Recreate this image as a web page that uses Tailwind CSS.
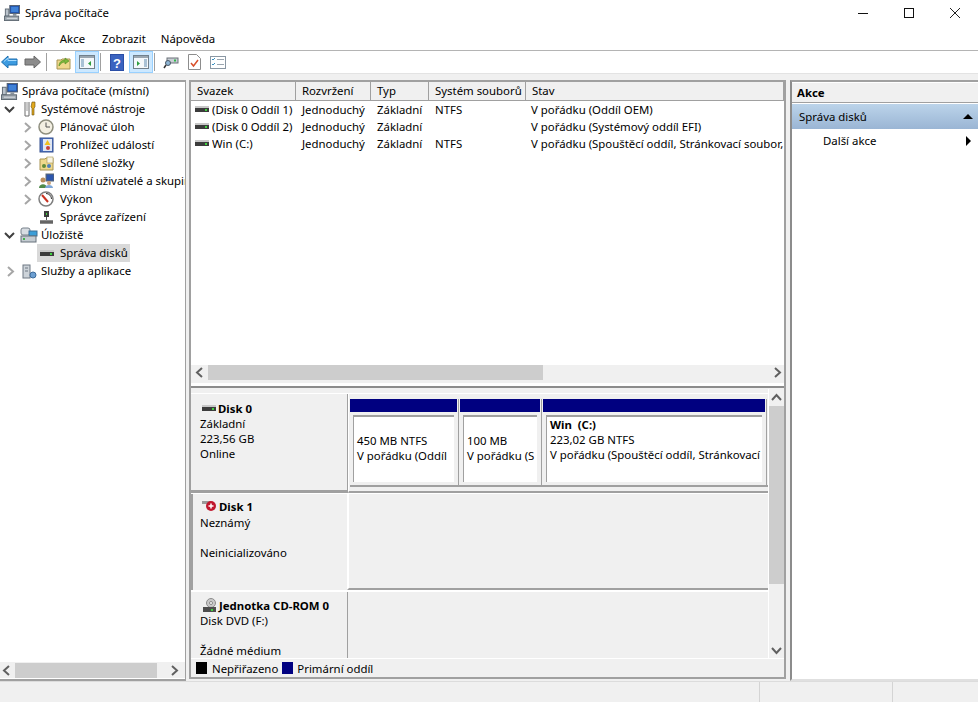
<!DOCTYPE html>
<html lang="cs">
<head>
<meta charset="UTF-8">
<title>Správa počítače</title>
<script src="https://cdn.jsdelivr.net/npm/@tailwindcss/browser@4"></script>
</head>
<body class="w-[978px] h-[702px] overflow-hidden bg-[#f0f0f0] text-[11.4px] leading-[16px] text-black font-['Noto_Sans','Liberation_Sans',sans-serif]">
<svg width="0" height="0" class="block h-0">
  <defs>
    <symbol id="chev-r" viewBox="0 0 9 11"><path d="M2 1l5 4.500-5 4.500" fill="none" stroke="#a6a6a6" stroke-width="2"/></symbol>
    <symbol id="chev-d" viewBox="0 0 11 9"><path d="M1 2l4.500 4.500L10 2" fill="none" stroke="#404040" stroke-width="2"/></symbol>
    <symbol id="sb-l" viewBox="0 0 9 11"><path d="M7 1L2 5.500 7 10" fill="none" stroke="#606060" stroke-width="2"/></symbol>
    <symbol id="sb-r" viewBox="0 0 9 11"><path d="M2 1l5 4.500L2 10" fill="none" stroke="#606060" stroke-width="2"/></symbol>
    <symbol id="sb-u" viewBox="0 0 11 9"><path d="M1 7l4.500-5L10 7" fill="none" stroke="#606060" stroke-width="2"/></symbol>
    <symbol id="sb-d" viewBox="0 0 11 9"><path d="M1 2l4.500 5L10 2" fill="none" stroke="#606060" stroke-width="2"/></symbol>
    <symbol id="hdd" viewBox="0 0 14 7"><rect width="14" height="2" fill="#c8c8c8"/><rect y="2" width="14" height="4" fill="#3c3c3c"/><rect x="10" y="3" width="2" height="2" fill="#3fd33f"/></symbol>
    <symbol id="computer" viewBox="0 0 18 18"><rect x="6.500" y=".5" width="11" height="9" fill="#1f4fa8" stroke="#55606e"/><rect x="8" y="2" width="8" height="6" fill="#3f82d8"/><rect x="10" y="10" width="4" height="2" fill="#8a949e"/><rect x="1.500" y="4.500" width="4" height="8" fill="#b9c2cb" stroke="#5b6670"/><rect x=".5" y="12.500" width="16" height="5" fill="#9aa3ab" stroke="#5b6670"/><path d="M3 15h12" stroke="#e2e6ea"/></symbol>
  </defs>
</svg>

<!-- title bar -->
<div class="h-[28px] bg-white flex items-center pb-[2px]">
  <svg class="ml-[4px] mr-[5px] w-[16px] h-[16px] shrink-0"><use href="#computer"/></svg>
  <span>Správa počítače</span>
  <div class="ml-auto flex items-center">
    <svg class="w-[46px] h-[14px]" viewBox="0 0 46 14"><path d="M18 7.500h10" stroke="#111"/></svg>
    <svg class="w-[46px] h-[14px]" viewBox="0 0 46 14"><rect x="18.500" y="2.500" width="9" height="9" fill="none" stroke="#111"/></svg>
    <svg class="w-[46px] h-[14px]" viewBox="0 0 46 14"><path d="M18 2l10 10M28 2L18 12" stroke="#222"/></svg>
  </div>
</div>

<!-- menu -->
<div class="h-[23px] bg-white border-b border-[#b4b4b4] flex items-center pl-[6px]">
  <span>Soubor</span><span class="ml-[15px]">Akce</span><span class="ml-[17px]">Zobrazit</span><span class="ml-[15px]">Nápověda</span>
</div>

<!-- toolbar -->
<div class="h-[23px] bg-white border-b border-[#e3e3e3] flex items-center">
  <svg class="ml-[1px] w-[17px] h-[14px] shrink-0" viewBox="0 0 17 14"><path d="M0.500 7L7 1v3h9v6H7v3z" fill="#3d9be0" stroke="#1d6fb0"/><path d="M3 6.500L7 3v2.500h8.500" fill="none" stroke="#a8dcff"/></svg>
  <svg class="ml-[6px] w-[17px] h-[14px] shrink-0" viewBox="0 0 17 14"><path d="M16.500 7L10 1v3H1v6h9v3z" fill="#8c8c8c" stroke="#666"/></svg>
  <div class="ml-[5px] w-px h-[18px] bg-[#a0a0a0]"></div>
  <svg class="ml-[9px] w-[15px] h-[15px] shrink-0" viewBox="0 0 15 15"><path d="M1 5h4l1-1h8v10H1z" fill="#efd98c" stroke="#a89452"/><path d="M3 11c0-4 3-6 6-6V3l4 3-4 3V7C6 7 4.500 9 3 11z" fill="#7cb83c" stroke="#4f8a1f" stroke-width=".6"/></svg>
  <div class="ml-[4px] w-[24px] h-[22px] bg-[#cce8ff] border border-[#99d1ff] flex items-center justify-center">
    <svg class="w-[16px] h-[14px]" viewBox="0 0 16 14"><rect x=".5" y=".5" width="15" height="13" fill="#f4f8fb" stroke="#71808c"/><rect x="1" y="1" width="14" height="2" fill="#9aa6b0"/><path d="M2 5h3M2 7h3M2 9h3M2 11h3" stroke="#5f8bb0"/><path d="M12 6v5L9 8.500z" fill="#2f9e3f"/></svg>
  </div>
  <div class="ml-[1px] w-px h-[18px] bg-[#a0a0a0]"></div>
  <svg class="ml-[9px] w-[14px] h-[17px] shrink-0" viewBox="0 0 14 17"><rect width="14" height="17" fill="#2a4ea6"/><rect x="1" y="1" width="12" height="15" fill="#3a63c0"/><text x="7" y="13.500" text-anchor="middle" font-size="13" font-weight="700" fill="#fff" font-family="Liberation Sans">?</text></svg>
  <div class="ml-[5px] w-[24px] h-[22px] bg-[#cce8ff] border border-[#99d1ff] flex items-center justify-center">
    <svg class="w-[16px] h-[14px]" viewBox="0 0 16 14"><rect x=".5" y=".5" width="15" height="13" fill="#f4f8fb" stroke="#71808c"/><rect x="1" y="1" width="14" height="2" fill="#9aa6b0"/><path d="M11 5h3M11 7h3M11 9h3M11 11h3" stroke="#5f8bb0"/><path d="M4 6v5l3-2.500z" fill="#2f9e3f"/></svg>
  </div>
  <div class="ml-[1px] w-px h-[18px] bg-[#a0a0a0]"></div>
  <svg class="ml-[8px] w-[16px] h-[14px] shrink-0" viewBox="0 0 16 14"><rect x="4" y="3" width="11" height="5" fill="#c9ced4" stroke="#6a7178"/><rect x="11" y="4.500" width="2" height="2" fill="#2fb84a"/><circle cx="5" cy="8" r="2.500" fill="#8fb6d6" stroke="#4a5a68"/><path d="M3 10l-2 3" stroke="#333" stroke-width="1.500"/></svg>
  <svg class="ml-[9px] w-[13px] h-[16px] shrink-0" viewBox="0 0 13 16"><path d="M.5.500h8l4 4v11H.5z" fill="#fff" stroke="#8d8d8d"/><path d="M3 9l2.500 3L10 6" fill="none" stroke="#d9502a" stroke-width="1.500"/></svg>
  <svg class="ml-[9px] w-[16px] h-[13px] shrink-0" viewBox="0 0 16 13"><rect x=".5" y=".5" width="15" height="12" fill="#fff" stroke="#8a97a3"/><path d="M2 3l1 1 2-2M2 8l1 1 2-2" fill="none" stroke="#3a8fc0"/><path d="M7 3.500h7M7 8.500h7" stroke="#9aa5af"/></svg>
</div>

<!-- panes -->
<div class="mt-[6px] h-[601px] flex">
  <!-- tree -->
  <div class="w-[186px] h-full bg-white border-t-2 border-b-2 border-r border-t-[#a0a0a0] border-b-[#a0a0a0] border-r-[#a0a0a0] flex flex-col">
    <div class="flex-1 overflow-hidden whitespace-nowrap">
      <div class="h-[18px] flex items-center pl-[1px]"><svg class="w-[17px] h-[17px] mr-[4px] shrink-0"><use href="#computer"/></svg>Správa počítače (místní)</div>
      <div class="h-[18px] flex items-center pl-[4px]">
        <svg class="w-[11px] h-[9px] mr-[7px] shrink-0"><use href="#chev-d"/></svg>
        <svg class="w-[16px] h-[16px] mr-[3px] shrink-0" viewBox="0 0 16 16"><path d="M3 1v14h4V1" stroke="#6d6d6d" stroke-width="1" fill="#fff"/><path d="M5 1v9" stroke="#9a9a9a"/><path d="M10 1h3v5l-1 1v7h-2V7l-1-1z" fill="#e2a91d" stroke="#6a5110" stroke-width=".6"/></svg>Systémové nástroje
      </div>
      <div class="h-[18px] flex items-center pl-[23px]">
        <svg class="w-[9px] h-[11px] mr-[6px] shrink-0"><use href="#chev-r"/></svg>
        <svg class="w-[16px] h-[16px] mr-[6px] shrink-0" viewBox="0 0 16 16"><circle cx="8" cy="8" r="7" fill="#f3efe2" stroke="#8e8e7e" stroke-width="1.500"/><path d="M8 3.500V8h4" fill="none" stroke="#555"/></svg>Plánovač úloh
      </div>
      <div class="h-[18px] flex items-center pl-[23px]">
        <svg class="w-[9px] h-[11px] mr-[7px] shrink-0"><use href="#chev-r"/></svg>
        <svg class="w-[15px] h-[16px] mr-[6px] shrink-0" viewBox="0 0 15 16"><rect x="1" y="1" width="13" height="14" fill="#4f74c6" stroke="#34508f"/><rect x="4" y="2" width="9" height="12" fill="#dfe6f4"/><path d="M8.500 3l3 5h-6z" fill="#f0c020"/><circle cx="9" cy="11" r="2" fill="#c8403a"/></svg>Prohlížeč událostí
      </div>
      <div class="h-[18px] flex items-center pl-[23px]">
        <svg class="w-[9px] h-[11px] mr-[7px] shrink-0"><use href="#chev-r"/></svg>
        <svg class="w-[15px] h-[15px] mr-[6px] shrink-0" viewBox="0 0 15 15"><path d="M1 3h5l1-1h7v12H1z" fill="#efd98c" stroke="#a89452"/><rect x="8" y="1" width="6" height="6" fill="#f8f4e2" stroke="#a89452" stroke-width=".6"/><circle cx="5" cy="10" r="2" fill="#5d8a3a"/><circle cx="10" cy="10" r="2" fill="#4d7fbd"/></svg>Sdílené složky
      </div>
      <div class="h-[18px] flex items-center pl-[23px]">
        <svg class="w-[9px] h-[11px] mr-[7px] shrink-0"><use href="#chev-r"/></svg>
        <svg class="w-[15px] h-[16px] mr-[6px] shrink-0" viewBox="0 0 15 16"><rect x="7" y="1" width="8" height="7" fill="#2c56ad" stroke="#5d6873"/><circle cx="4" cy="7" r="2.500" fill="#b98d5a"/><path d="M0 15c0-5 8-5 8 0z" fill="#4f8b4a"/><circle cx="10" cy="10" r="2" fill="#c9a27a"/><path d="M6 15c0-4 8-4 8 0z" fill="#7ea7d8"/></svg>Místní uživatelé a skupin
      </div>
      <div class="h-[18px] flex items-center pl-[23px]">
        <svg class="w-[9px] h-[11px] mr-[6px] shrink-0"><use href="#chev-r"/></svg>
        <svg class="w-[16px] h-[16px] mr-[6px] shrink-0" viewBox="0 0 16 16"><circle cx="8" cy="8" r="7" fill="#fff" stroke="#7f7f7f" stroke-width="1.500"/><path d="M4 4l6 7" stroke="#c8301f" stroke-width="2"/><path d="M8 2.500a5.500 5.500 0 015.500 5.500" fill="none" stroke="#333"/></svg>Výkon
      </div>
      <div class="h-[18px] flex items-center pl-[39px]">
        <svg class="w-[15px] h-[15px] mr-[6px] shrink-0" viewBox="0 0 15 15"><rect x="5" y="1" width="5" height="6" fill="#3c3c3c"/><rect x="7" y="3" width="1" height="2" fill="#3fd33f"/><path d="M7.500 7v3" stroke="#555"/><rect x="1" y="10" width="13" height="4" fill="#8d8d8d"/><path d="M1 12h13" stroke="#3c3c3c"/></svg>Správce zařízení
      </div>
      <div class="h-[18px] flex items-center pl-[4px]">
        <svg class="w-[11px] h-[9px] mr-[5px] shrink-0"><use href="#chev-d"/></svg>
        <svg class="w-[18px] h-[16px] mr-[3px] shrink-0" viewBox="0 0 18 16"><rect x="1" y="1" width="9" height="7" rx="2" fill="#d8dde2" stroke="#76808a"/><rect x="9" y="4" width="8" height="5" fill="#3b9ed8" stroke="#3a6f96"/><rect x="1" y="9" width="15" height="6" fill="#c4cbd1" stroke="#66707a"/><rect x="3" y="11" width="2" height="2" fill="#3fb34a"/></svg>Úložiště
      </div>
      <div class="h-[18px] flex items-center pl-[37px]">
        <div class="h-[18px] w-[93px] bg-[#d9d9d9] flex items-center pl-[3px]">
          <svg class="w-[14px] h-[7px] mr-[6px] shrink-0"><use href="#hdd"/></svg>Správa disků
        </div>
      </div>
      <div class="h-[18px] flex items-center pl-[6px]">
        <svg class="w-[9px] h-[11px] mr-[7px] shrink-0"><use href="#chev-r"/></svg>
        <svg class="w-[15px] h-[15px] mr-[4px] shrink-0" viewBox="0 0 15 15"><rect x="1" y="1" width="7" height="13" fill="#cdd3d9" stroke="#6f7983"/><path d="M3 4h3M3 7h3" stroke="#6f7983"/><circle cx="11" cy="11" r="3" fill="#6d9fd1" stroke="#3d6c9c"/></svg>Služby a aplikace
      </div>
    </div>
    <div class="h-[16px] mb-[1px] bg-[#f0f0f0] flex items-center">
      <svg class="w-[9px] h-[11px] ml-[2px] shrink-0"><use href="#sb-l"/></svg>
      <div class="ml-[4px] w-[142px] h-[15px] bg-[#cdcdcd]"></div>
      <svg class="w-[9px] h-[11px] ml-[13px] shrink-0"><use href="#sb-r"/></svg>
    </div>
  </div>

  <!-- center -->
  <div class="ml-[3px] w-[597px] h-[599px] flex flex-col border-2 border-[#a0a0a0]">
    <!-- volume list -->
    <div class="h-[306px] shrink-0 bg-white flex flex-col border-b-2 border-b-[#8c8c8c] mb-[1px] whitespace-nowrap overflow-hidden">
      <div class="h-[19px] flex bg-[#f0f0f0] border-b border-[#a0a0a0] [&>div]:border-r [&>div]:border-[#a0a0a0] [&>div]:pl-[6px] [&>div]:flex [&>div]:items-center shrink-0">
        <div class="w-[105px]">Svazek</div>
        <div class="w-[75px]">Rozvržení</div>
        <div class="w-[58px]">Typ</div>
        <div class="w-[97px]">Systém souborů</div>
        <div class="flex-1">Stav</div>
      </div>
      <div class="flex-1">
        <div class="h-[17px] flex items-center">
          <svg class="ml-[4px] mr-[3px] w-[14px] h-[7px] shrink-0"><use href="#hdd"/></svg>
          <span class="w-[89px] overflow-hidden">(Disk 0 Oddíl 1)</span>
          <span class="w-[76px] pl-px">Jednoduchý</span><span class="w-[58px]">Základní</span><span class="w-[96px]">NTFS</span><span>V pořádku (Oddíl OEM)</span>
        </div>
        <div class="h-[17px] flex items-center">
          <svg class="ml-[4px] mr-[3px] w-[14px] h-[7px] shrink-0"><use href="#hdd"/></svg>
          <span class="w-[89px] overflow-hidden">(Disk 0 Oddíl 2)</span>
          <span class="w-[76px] pl-px">Jednoduchý</span><span class="w-[58px]">Základní</span><span class="w-[96px]"></span><span>V pořádku (Systémový oddíl EFI)</span>
        </div>
        <div class="h-[17px] flex items-center">
          <svg class="ml-[4px] mr-[3px] w-[14px] h-[7px] shrink-0"><use href="#hdd"/></svg>
          <span class="w-[89px] overflow-hidden">Win (C:)</span>
          <span class="w-[76px] pl-px">Jednoduchý</span><span class="w-[58px]">Základní</span><span class="w-[96px]">NTFS</span><span>V pořádku (Spouštěcí oddíl, Stránkovací soubor,</span>
        </div>
      </div>
      <div class="h-[18px] mb-[3px] bg-[#f0f0f0] flex items-start shrink-0">
        <svg class="w-[9px] h-[11px] ml-[4px] mt-[2px] shrink-0"><use href="#sb-l"/></svg>
        <div class="ml-[4px] w-[335px] h-[15px] bg-[#cdcdcd]"></div>
        <svg class="w-[9px] h-[11px] ml-[230px] mt-[2px] shrink-0"><use href="#sb-r"/></svg>
      </div>
    </div>

    <!-- disk map -->
    <div class="flex-1 flex flex-col min-h-0 leading-[15px]">
      <div class="flex-1 flex min-h-0">
        <div class="w-[577px] overflow-hidden pt-[4px] bg-[#f0f0f0]">
          <!-- disk 0 -->
          <div class="h-[100px] flex border-t border-white">
            <div class="w-[157px] h-full border-b-[3px] border-r border-[#a0a0a0] pl-[9px] pt-[7px]">
              <div class="flex items-center font-bold"><svg class="ml-[2px] mr-[2px] w-[14px] h-[7px] shrink-0"><use href="#hdd"/></svg>Disk 0</div>
              <div>Základní</div>
              <div>223,56 GB</div>
              <div>Online</div>
            </div>
            <div class="flex-1 border-b-2 border-[#a0a0a0] pl-[1px] pt-[5px] border-l border-l-white">
              <div class="flex h-[88px] border-b-2 border-[#a0a0a0]">
                <div class="w-[109px] border-r border-[#a0a0a0] pr-[1px] mr-[1px]">
                  <div class="h-[13px] bg-[#000080]"></div>
                  <div class="mt-[3px] ml-[3px] mr-[3px] h-[67px] bg-white border-t-2 border-l border-[#a0a0a0] pl-[3px] pt-[16px] whitespace-nowrap overflow-hidden">450 MB NTFS<br>V pořádku (Oddíl</div>
                </div>
                <div class="w-[82px] border-r border-[#a0a0a0] pr-[1px] mr-[1px]">
                  <div class="h-[13px] bg-[#000080]"></div>
                  <div class="mt-[3px] ml-[3px] mr-[3px] h-[67px] bg-white border-t-2 border-l border-[#a0a0a0] pl-[3px] pt-[16px] whitespace-nowrap overflow-hidden">100 MB<br>V pořádku (S</div>
                </div>
                <div class="w-[224px] border-r border-[#a0a0a0] pr-[1px]">
                  <div class="h-[13px] bg-[#000080]"></div>
                  <div class="mt-[3px] ml-[3px] mr-[3px] h-[67px] bg-white border-t-2 border-l border-[#a0a0a0] pl-[3px] whitespace-nowrap overflow-hidden"><span class="font-bold">Win&nbsp; (C:)</span><br>223,02 GB NTFS<br>V pořádku (Spouštěcí oddíl, Stránkovací</div>
                </div>
              </div>
            </div>
          </div>
          <!-- disk 1 -->
          <div class="h-[97px] flex border-t border-white">
            <div class="w-[156px] pl-[7px] pt-[5px] border-l-2 border-[#a0a0a0]">
              <div class="flex items-center font-bold"><svg class="ml-[2px] mr-[2px] w-[15px] h-[13px] shrink-0" viewBox="0 0 15 13"><rect y="1" width="9" height="3" fill="#9a9a9a"/><circle cx="9" cy="6" r="5" fill="#c0172e"/><path d="M9 3.500v5M6.500 6h5" stroke="#fff" stroke-width="1.500"/></svg>Disk 1</div>
              <div class="mt-px">Neznámý</div>
              <div class="mt-[15px]">Neinicializováno</div>
            </div>
            <div class="flex-1 border-l-2 border-l-white border-b-2 border-[#a0a0a0]"></div>
          </div>
          <!-- cd -->
          <div class="flex border-t-2 border-white h-[70px]">
            <div class="w-[157px] h-full pl-[9px] pt-[6px] border-r border-[#a0a0a0] whitespace-nowrap">
              <div class="flex items-center font-bold"><svg class="ml-[2px] mr-[2px] w-[15px] h-[15px] shrink-0" viewBox="0 0 15 15"><circle cx="9" cy="5" r="4.500" fill="#c9c9c9" stroke="#8d8d8d"/><circle cx="9" cy="5" r="1.500" fill="#fff" stroke="#888"/><rect x="1" y="9" width="13" height="5" fill="#4d4d4d"/><rect x="9" y="11" width="2" height="2" fill="#3fd33f"/></svg>Jednotka CD-ROM 0</div>
              <div>Disk DVD (F:)</div>
              <div class="mt-[15px]">Žádné médium</div>
            </div>
          </div>
        </div>
        <div class="w-[16px] bg-[#f0f0f0] flex flex-col items-center border-l border-white">
          <svg class="mt-[4px] w-[11px] h-[9px] shrink-0"><use href="#sb-u"/></svg>
          <div class="mt-[4px] w-[15px] h-[178px] bg-[#cdcdcd]"></div>
          <svg class="mt-auto mb-[3px] w-[11px] h-[9px] shrink-0"><use href="#sb-d"/></svg>
        </div>
      </div>
      <div class="h-[19px] shrink-0 border-t border-white flex items-center bg-[#f0f0f0] pl-[5px]">
        <div class="w-[11px] h-[12px] bg-black mr-[5px] shrink-0"></div>Nepřiřazeno
        <div class="w-[11px] h-[12px] bg-[#000080] ml-[4px] mr-[4px] shrink-0"></div>Primární oddíl
      </div>
    </div>
  </div>

  <!-- actions -->
  <div class="ml-[4px] flex-1 h-full bg-white border-l-2 border-t-2 border-b-2 border-l-[#8c8c8c] border-t-[#a0a0a0] border-b-[#e0e0e0] whitespace-nowrap">
    <div class="h-[21px] bg-[#f0f0f0] border-t border-white border-b border-b-[#a0a0a0] font-bold pl-[5px] flex items-center">Akce</div>
    <div class="mt-[1px] h-[25px] bg-gradient-to-b from-[#bcd4ea] to-[#9ab5d4] flex items-center pl-[7px]">Správa disků
      <svg class="ml-auto mr-[5px] w-[10px] h-[5px]" viewBox="0 0 10 5"><path d="M0 5l5-5 5 5z" fill="#000"/></svg>
    </div>
    <div class="h-[24px] flex items-center pl-[31px]">Další akce
      <svg class="ml-auto mr-[7px] w-[5px] h-[10px]" viewBox="0 0 5 10"><path d="M0 0l5 5-5 5z" fill="#000"/></svg>
    </div>
  </div>
</div>

<!-- status bar -->
<div class="h-[21px] border-t border-[#dcdcdc] flex justify-end">
  <div class="w-[133px] border-l border-[#d4d4d4]"></div>
  <div class="w-[86px] border-l border-[#d4d4d4]"></div>
</div>
</body>
</html>
